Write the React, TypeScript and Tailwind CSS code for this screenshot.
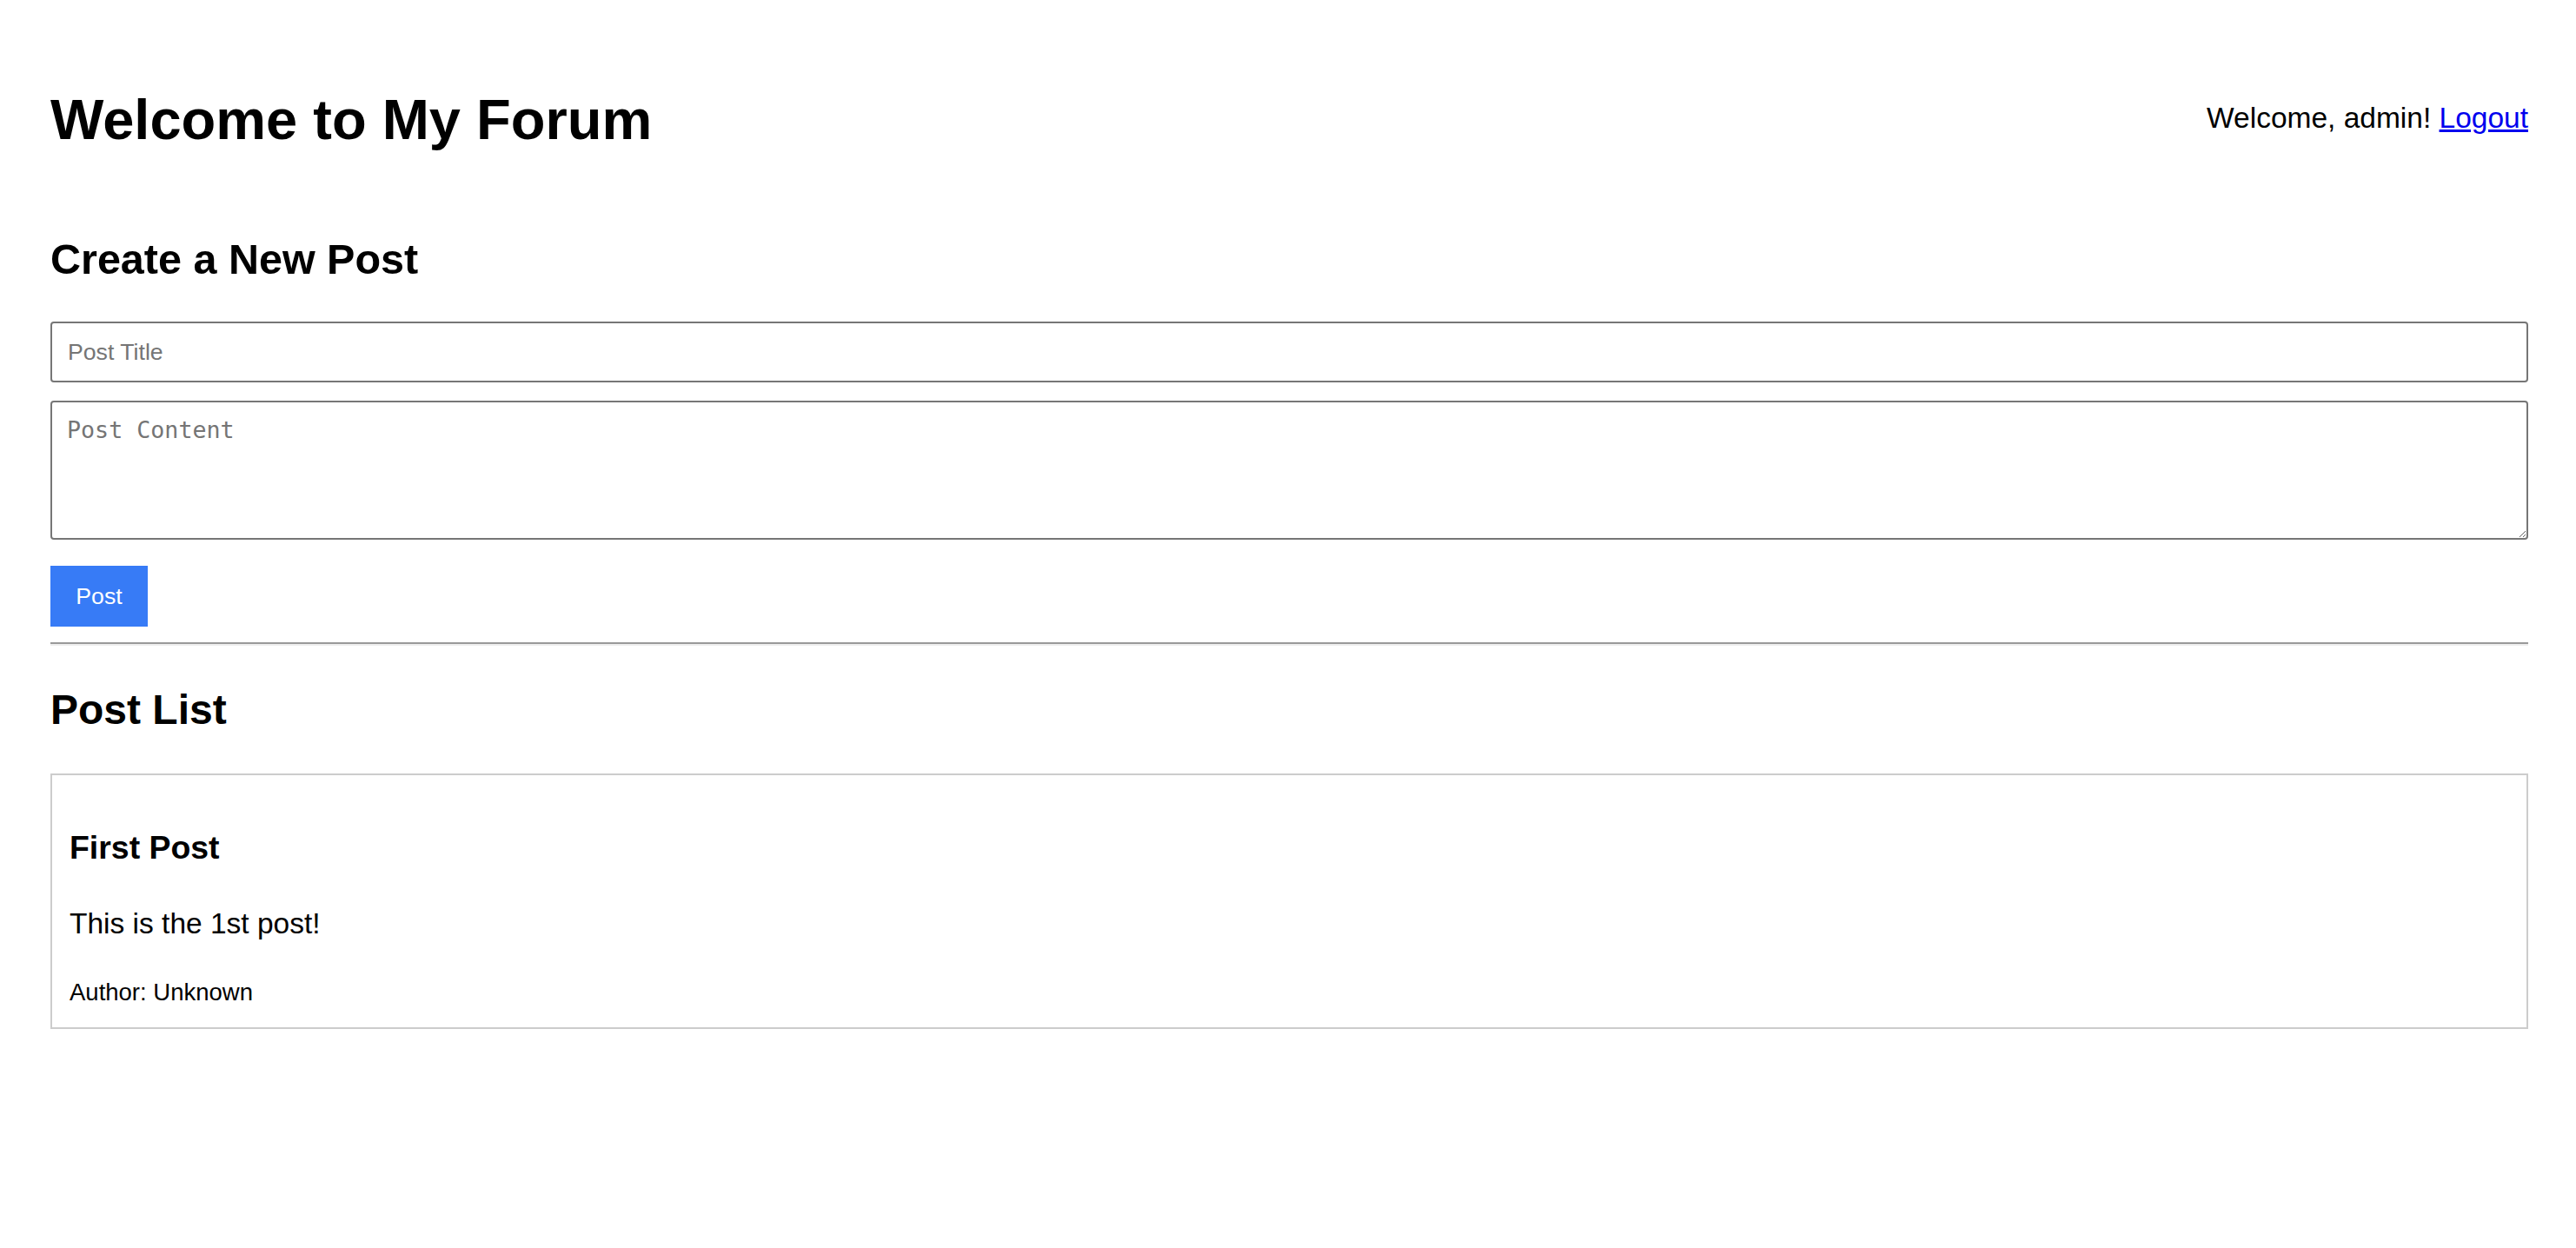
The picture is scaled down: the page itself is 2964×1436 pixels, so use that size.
import { useState } from "react";

const sans = { fontFamily: '"Liberation Sans", Arial, sans-serif' };

type Post = { id: number; title: string; content: string; author?: string };

const initialPosts: Post[] = [
  { id: 1, title: "First Post", content: "This is the 1st post!" },
];

function Header() {
  return (
    <header className="flex items-center justify-between">
      <h1 className="text-[65px] leading-[74px] font-bold text-black">
        Welcome to My Forum
      </h1>
      <div className="mb-[6px] text-[33.5px] leading-[37px] text-black">
        Welcome, admin!{" "}
        <a href="#" className="text-[#0000ee] underline">
          Logout
        </a>
      </div>
    </header>
  );
}

function NewPostForm({ onAdd }: { onAdd: (p: Post) => void }) {
  const [title, setTitle] = useState("");
  const [content, setContent] = useState("");

  return (
    <section className="mt-[95px]">
      <h2 className="text-[48.5px] leading-[56px] font-bold text-black">
        Create a New Post
      </h2>
      <form
        className="mt-[44px] flex flex-col"
        onSubmit={(e) => {
          e.preventDefault();
          if (!title) return;
          onAdd({ id: Date.now(), title, content });
          setTitle("");
          setContent("");
        }}
      >
        <input
          value={title}
          onChange={(e) => setTitle(e.target.value)}
          placeholder="Post Title"
          className="block w-full h-[70px] px-[18px] border-2 border-[#767676] rounded-[4px] text-[26.67px] text-black placeholder:text-[#757575] outline-none"
          style={sans}
        />
        <textarea
          value={content}
          onChange={(e) => setContent(e.target.value)}
          placeholder="Post Content"
          className="block w-full h-[160px] mt-[21px] px-[17px] pt-[16px] border-2 border-[#767676] rounded-[4px] text-[26.67px] leading-[31px] text-black placeholder:text-[#757575] outline-none resize"
          style={{ fontFamily: '"DejaVu Sans Mono", monospace' }}
        />
        <button
          type="submit"
          className="mt-[30px] w-[112px] h-[70px] bg-[#377bf6] text-white text-[26.67px]"
          style={sans}
        >
          Post
        </button>
      </form>
    </section>
  );
}

function PostCard({ post }: { post: Post }) {
  return (
    <div className="border-2 border-[#cccccc] px-[20px] pt-[62px] pb-[24px]">
      <h3 className="text-[37.44px] leading-[43px] font-bold text-black">
        {post.title}
      </h3>
      <p className="mt-[47px] text-[33.5px] leading-[37px] text-black">
        {post.content}
      </p>
      <p className="mt-[45px] text-[27.5px] leading-[32px] text-black">
        Author: {post.author ?? "Unknown"}
      </p>
    </div>
  );
}

export default function App() {
  const [posts, setPosts] = useState<Post[]>(initialPosts);

  return (
    <div className="min-h-screen bg-white pl-[58px] pr-[55px] pt-[101px] pb-[60px]" style={sans}>
      <Header />
      <NewPostForm onAdd={(p) => setPosts([p, ...posts])} />
      <hr className="mt-[18px] h-0 border-t-2 border-b-2 border-x-0 border-t-[#9a9a9a] border-b-[#eeeeee]" />
      <section>
        <h2 className="mt-[46px] text-[48px] leading-[56px] font-bold text-black">
          Post List
        </h2>
        <div className="mt-[45px] flex flex-col gap-[20px]">
          {posts.map((p) => (
            <PostCard key={p.id} post={p} />
          ))}
        </div>
      </section>
    </div>
  );
}
